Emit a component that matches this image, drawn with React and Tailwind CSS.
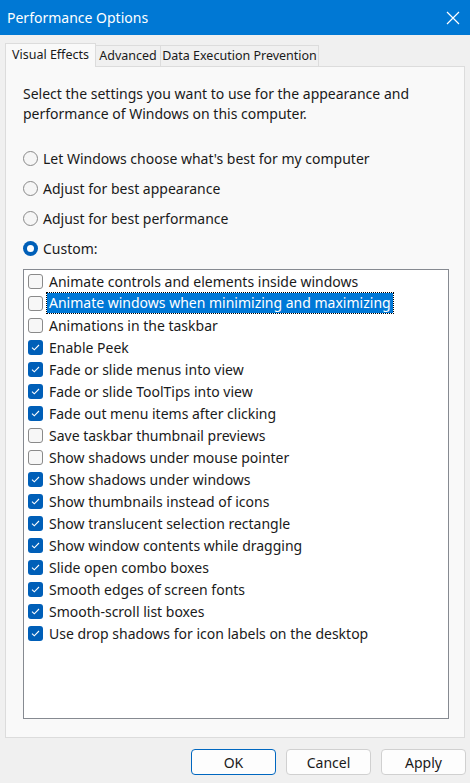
import React from 'react';

const FONT = { fontFamily: '"Segoe UI", "Noto Sans", sans-serif' };

const options = [
  "Let Windows choose what's best for my computer",
  'Adjust for best appearance',
  'Adjust for best performance',
  'Custom:',
];

const effects = [
  ['Animate controls and elements inside windows', false],
  ['Animate windows when minimizing and maximizing', false],
  ['Animations in the taskbar', false],
  ['Enable Peek', true],
  ['Fade or slide menus into view', true],
  ['Fade or slide ToolTips into view', true],
  ['Fade out menu items after clicking', true],
  ['Save taskbar thumbnail previews', false],
  ['Show shadows under mouse pointer', false],
  ['Show shadows under windows', true],
  ['Show thumbnails instead of icons', true],
  ['Show translucent selection rectangle', true],
  ['Show window contents while dragging', true],
  ['Slide open combo boxes', true],
  ['Smooth edges of screen fonts', true],
  ['Smooth-scroll list boxes', true],
  ['Use drop shadows for icon labels on the desktop', true],
];

function Radio({ checked }) {
  if (checked) {
    return (
      <span className="w-[15px] h-[15px] rounded-full bg-[#005fb8] flex items-center justify-center shrink-0">
        <span className="w-[7px] h-[7px] rounded-full bg-white" />
      </span>
    );
  }
  return <span className="w-[15px] h-[15px] rounded-full border border-[#8a8a8a] bg-[#f6f6f6] shrink-0" />;
}

function Check({ checked }) {
  if (checked) {
    return (
      <span className="w-[15px] h-[15px] rounded-[3px] bg-[#005fb8] flex items-center justify-center shrink-0">
        <svg width="9" height="7" viewBox="0 0 9 7" fill="none">
          <path d="M1 3.6 L3.3 5.8 L8 1" stroke="white" strokeWidth="1.1" />
        </svg>
      </span>
    );
  }
  return <span className="w-[15px] h-[15px] rounded-[3px] border border-[#8a8a8a] bg-[#f7f7f7] shrink-0" />;
}

export default function App() {
  return (
    <div className="w-[470px] h-[783px] bg-[#f0f0f0] flex flex-col text-[#1a1a1a]" style={FONT}>
      {/* Title bar */}
      <div className="h-[35px] bg-[#0078d4] flex items-center justify-between pl-[7px] pr-[10px]">
        <span className="text-white text-[14px]">Performance Options</span>
        <svg width="14" height="14" viewBox="0 0 14 14" fill="none">
          <path d="M1 1 L13 13 M13 1 L1 13" stroke="white" strokeWidth="1.2" />
        </svg>
      </div>

      {/* Tabs */}
      <div className="flex items-end pl-[5px] mt-[8px] text-[12.5px]">
        <div className="relative z-10 -mb-px w-[91px] h-[24px] flex items-center justify-center bg-[#f9f9f9] border border-b-0 border-[#dcdcdc]">
          Visual Effects
        </div>
        <div className="w-[65px] h-[21px] flex items-center justify-center bg-[#f0f0f0] border border-l-0 border-b-0 border-[#dcdcdc]">
          Advanced
        </div>
        <div className="w-[158px] h-[21px] flex items-center justify-center bg-[#f0f0f0] border border-l-0 border-b-0 border-[#dcdcdc]">
          Data Execution Prevention
        </div>
      </div>

      {/* Panel */}
      <div className="mx-[5px] w-[460px] h-[672px] bg-[#f9f9f9] border border-[#dcdcdc] flex flex-col pl-[17px] pr-[15px] text-[14px]">
        <p className="mt-[17px] leading-[20px]">
          Select the settings you want to use for the appearance and performance of Windows on this computer.
        </p>

        <div className="mt-[27px] flex flex-col gap-[15px]">
          {options.map((o, i) => (
            <label key={o} className="flex items-center gap-[5px] h-[15px]">
              <Radio checked={i === 3} />
              <span>{o}</span>
            </label>
          ))}
        </div>

        <div className="mt-[13px] w-[426px] h-[450px] bg-white border border-[#868a91] flex flex-col pl-[4px]">
          {effects.map(([label, on], i) => (
            <div key={label} className="h-[22px] flex items-center gap-[4px]">
              <Check checked={on} />
              {i === 1 ? (
                <span className="bg-[#0078d7] text-white px-[2px] leading-[20px] outline-1 outline-dotted outline-black">
                  {label}
                </span>
              ) : (
                <span className="px-[2px]">{label}</span>
              )}
            </div>
          ))}
        </div>
      </div>

      {/* Buttons */}
      <div className="flex justify-end gap-[10px] pr-[4px] mt-[11px] text-[14px]">
        <button className="w-[85px] h-[26px] rounded-[4px] bg-[#fdfdfd] border border-[#0067c0]">OK</button>
        <button className="w-[85px] h-[26px] rounded-[4px] bg-[#fdfdfd] border border-[#d0d0d0]">Cancel</button>
        <button className="w-[85px] h-[26px] rounded-[4px] bg-[#fdfdfd] border border-[#d0d0d0]">Apply</button>
      </div>
    </div>
  );
}
